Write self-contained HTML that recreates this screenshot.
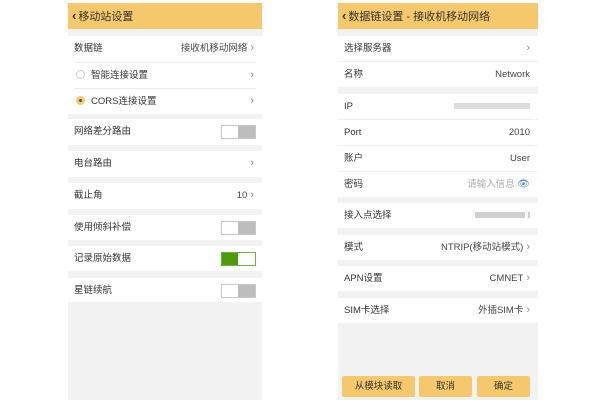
<!DOCTYPE html>
<html><head><meta charset="utf-8"><style>
*{margin:0;padding:0;box-sizing:border-box}
body{width:600px;height:400px;background:#fff;position:relative;overflow:hidden;font-family:"Liberation Sans","Noto Sans CJK SC",sans-serif;font-size:9.5px;color:#333}
.p{position:absolute;top:3px;background:#f2f2f2;height:397px}
.hd{position:absolute;left:0;right:0;top:0;height:26px;background:#f5c96b;font-size:11px;color:#333;line-height:26px;padding-left:4px}
.hd b{font-size:13px;font-weight:bold;margin-right:2px}
.r{position:absolute;left:0;right:0;background:#fff;line-height:25px;padding-left:6px;padding-right:8px}
.r .v{position:absolute;right:8px;top:0;color:#444}
.ln{position:absolute;left:6px;right:6px;height:1px;background:#ececec}
.ch{color:#888;font-size:11px;margin-left:3px}
.tg{position:absolute;right:6px;top:6px;width:35px;height:14px;border:1px solid #c8c8c8;background:#fff}
.tg i{position:absolute;right:0;top:0;width:17px;height:12px;background:#bdbdbd}
.tg.on{border-color:#6cb43f}
.tg.on i{left:0;right:auto;width:16px;background:#4d9a0a}
.rd{display:inline-block;width:9px;height:9px;border-radius:50%;border:1px solid #ccc;vertical-align:-1px;margin-right:6px;margin-left:2px}
.rd.on{background:#f5c96b;border-color:#f5c96b;position:relative}
.rd.on:after{content:"";position:absolute;left:2px;top:2px;width:3px;height:3px;border-radius:50%;background:#555}
.b{position:absolute;top:373px;height:21px;background:#f5c96b;border-radius:2px;text-align:center;line-height:21px;font-size:9.5px;color:#333}
.blur{display:inline-block;height:6px;background:#d0d0d0;vertical-align:middle}
</style></head><body>
<div class="p" style="left:68px;width:194px">
<div class="hd"><b>‹</b>移动站设置</div>
<div class="r" style="top:33px;height:78px"></div>
<div class="r" style="top:33px;height:26px">数据链<span class="v">接收机移动网络<span class="ch">›</span></span></div>
<div class="ln" style="top:85px"></div>
<div class="r" style="top:60px;height:25px"><span class="rd"></span>智能连接设置<span class="v"><span class="ch">›</span></span></div>
<div class="ln" style="top:59px"></div>
<div class="r" style="top:86px;height:25px"><span class="rd on"></span>CORS连接设置<span class="v"><span class="ch">›</span></span></div>
<div class="r" style="top:116px;height:26px">网络差分路由<div class="tg"><i></i></div></div>
<div class="r" style="top:148px;height:26px">电台路由<span class="v"><span class="ch">›</span></span></div>
<div class="r" style="top:180px;height:26px">截止角<span class="v">10<span class="ch">›</span></span></div>
<div class="r" style="top:212px;height:25px">使用倾斜补偿<div class="tg"><i></i></div></div>
<div class="r" style="top:243px;height:25px">记录原始数据<div class="tg on"><i></i></div></div>
<div class="r" style="top:275px;height:24px">星链续航<div class="tg"><i></i></div></div>
</div>

<div class="p" style="left:338px;width:200px">
<div class="hd"><b>‹</b>数据链设置 - 接收机移动网络</div>
<div class="r" style="top:33px;height:25px">选择服务器<span class="v"><span class="ch">›</span></span></div>
<div class="ln" style="top:58px"></div>
<div class="r" style="top:59px;height:25px">名称<span class="v">Network</span></div>
<div class="r" style="top:91px;height:25px">IP<span class="v"><span class="blur" style="width:76px;background:#dcdcdc"></span></span></div>
<div class="ln" style="top:116px"></div>
<div class="r" style="top:117px;height:25px">Port<span class="v">2010</span></div>
<div class="ln" style="top:142px"></div>
<div class="r" style="top:143px;height:25px">账户<span class="v">User</span></div>
<div class="ln" style="top:168px"></div>
<div class="r" style="top:169px;height:25px">密码<span class="v" style="color:#aaa">请输入信息 <span style="color:#3f8ee0;font-size:10px">👁</span></span></div>
<div class="r" style="top:200px;height:25px">接入点选择<span class="v"><span class="blur" style="width:50px"></span> <span class="blur" style="width:2px"></span></span></div>
<div class="r" style="top:232px;height:25px">模式<span class="v">NTRIP(移动站模式)<span class="ch">›</span></span></div>
<div class="r" style="top:263px;height:25px">APN设置<span class="v">CMNET<span class="ch">›</span></span></div>
<div class="r" style="top:295px;height:25px">SIM卡选择<span class="v">外插SIM卡<span class="ch">›</span></span></div>
<div class="b" style="left:4px;width:73px">从模块读取</div>
<div class="b" style="left:81px;width:53px">取消</div>
<div class="b" style="left:139px;width:53px">确定</div>
</div>
</body></html>
